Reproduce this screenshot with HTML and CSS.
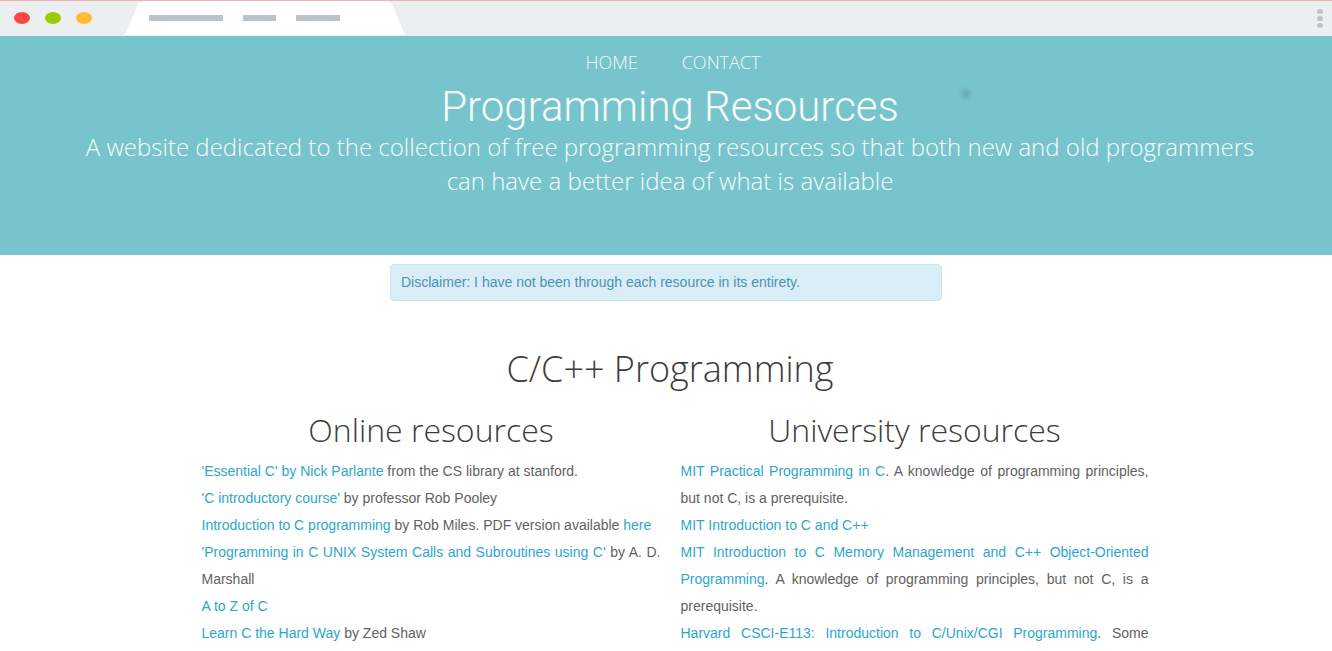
FILE: index.html
```html
<!DOCTYPE html>
<html lang="en">
<head>
<meta charset="utf-8">
<meta name="viewport" content="width=device-width, initial-scale=1">
<title>Programming Resources</title>
<link rel="stylesheet" href="styles.css">
</head>
<body>
<div class="browser-bar">
  <div class="lights"><span class="light red"></span><span class="light green"></span><span class="light amber"></span></div>
  <div class="tab"><span class="dash wide"></span><span class="dash small"></span><span class="dash medium"></span></div>
  <div class="menu-dots"><span></span><span></span><span></span></div>
</div>
<header class="hero">
  <nav class="nav"><a href="#">HOME</a><a href="#">CONTACT</a></nav>
  <h1>Programming Resources</h1>
  <p class="tagline">A website dedicated to the collection of free programming resources so that both new and old programmers can have a better idea of what is available</p>
  <span class="spot"></span>
</header>
<main>
  <div class="notice">Disclaimer: I have not been through each resource in its entirety.</div>
  <h2>C/C++ Programming</h2>
  <div class="columns">
    <section>
      <h3>Online resources</h3>
      <ul>
        <li><a href="#">'Essential C' by Nick Parlante</a> from the CS library at stanford.</li>
        <li><a href="#">'C introductory course'</a> by professor Rob Pooley</li>
        <li><a href="#">Introduction to C programming</a> by Rob Miles. PDF version available <a href="#">here</a></li>
        <li><a href="#">'Programming in C UNIX System Calls and Subroutines using C'</a> by A. D. Marshall</li>
        <li><a href="#">A to Z of C</a></li>
        <li><a href="#">Learn C the Hard Way</a> by Zed Shaw</li>
      </ul>
    </section>
    <section>
      <h3>University resources</h3>
      <ul>
        <li><a href="#">MIT Practical Programming in C</a>. A knowledge of programming principles, but not C, is a prerequisite.</li>
        <li><a href="#">MIT Introduction to C and C++</a></li>
        <li><a href="#">MIT Introduction to C Memory Management and C++ Object-Oriented Programming</a>. A knowledge of programming principles, but not C, is a prerequisite.</li>
        <li class="full-line"><a href="#">Harvard CSCI-E113: Introduction to C/Unix/CGI Programming</a>. Some</li>
      </ul>
    </section>
  </div>
</main>
</body>
</html>
```
FILE: styles.css
```css
* { box-sizing: border-box; }
body { margin: 0; background: #fff; color: #626262; font: 14px/27px "Liberation Sans", Arial, sans-serif; }
a { color: #2ea6cc; text-decoration: none; }
h1, h2, h3, p, ul { margin: 0; padding: 0; font-weight: 300; }
h2, h3, .nav, .tagline { font-family: "Open Sans", sans-serif; font-weight: 300; }
.browser-bar { display: flex; align-items: stretch; height: 36px; padding-bottom: 1px; background: #ebeff0; border-top: 1px solid #f4b1b1; }
.lights { display: flex; align-items: center; gap: 15px; padding-left: 14px; width: 124px; }
.light { width: 16px; height: 12px; border-radius: 50%; }
.red { background: #ff4444; }
.green { background: #99cc00; }
.amber { background: #ffbb33; }
.tab { display: flex; align-items: center; gap: 20px; width: 282px; padding-left: 25px; background: #fff; clip-path: polygon(0 100%, 2px 94%, 14px 8%, 18px 0, 264px 0, 268px 8%, 280px 94%, 100% 100%); }
.dash { height: 6px; background: #bdc3c7; }
.wide { width: 74px; }
.small { width: 33px; }
.medium { width: 44px; }
.menu-dots { display: flex; flex-direction: column; justify-content: center; gap: 2px; margin-left: auto; padding-right: 9px; }
.menu-dots span { width: 6px; height: 5px; border-radius: 50%; background: #bdc3c7; }
.hero { position: relative; padding: 12px 76px 57px 84px; background: #78c4cd; color: #f6fcfc; text-align: center; }
.nav { display: flex; justify-content: center; gap: 44px; padding-left: 6px; font-size: 18px; line-height: 28px; }
.nav a { color: #f0fafa; }
h1 { padding-top: 8px; font-family: Roboto, sans-serif; font-size: 42px; line-height: 46px; }
.tagline { font-size: 24px; line-height: 34px; }
.spot { position: absolute; left: 961px; top: 53px; width: 10px; height: 10px; border-radius: 50%; background: #68acb5; filter: blur(2px); }
.notice { width: 552px; max-width: 100%; margin: 9px auto 0; padding: 4px 10px; border: 1px solid #c4e9f2; border-radius: 4px; background: #d9edf7; color: #4a93b8; }
h2 { margin-top: 41px; padding-left: 8px; color: #3c3c3c; font-size: 36px; line-height: 54px; text-align: center; }
h3 { color: #3c3c3c; font-size: 32px; line-height: 44px; text-align: center; }
.columns { display: grid; grid-template-columns: 459px 468px; justify-content: center; gap: 20px; margin-top: 12px; padding-left: 18px; }
ul { padding-top: 6px; list-style: none; text-align: justify; }
.full-line { text-align-last: justify; }
```
